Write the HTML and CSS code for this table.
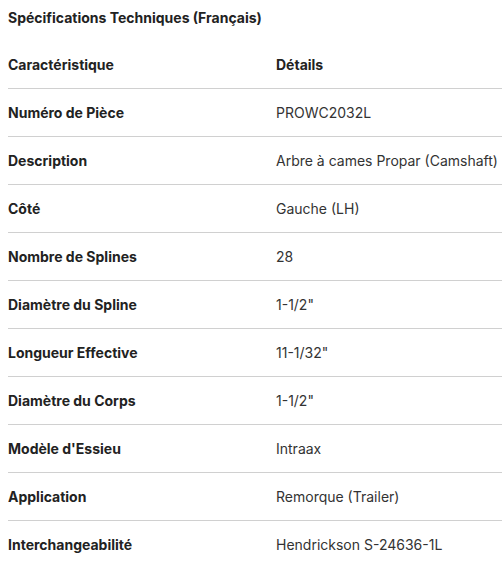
FILE: index.html
```html
<!DOCTYPE html>
<html lang="fr">
<head>
<meta charset="utf-8">
<title>Spécifications Techniques</title>
<link rel="stylesheet" href="styles.css">
</head>
<body>
<div class="spec">
  <div class="spec-title">Spécifications Techniques (Français)</div>
  <div class="spec-table">
    <div class="row head"><div class="key">Caractéristique</div><div class="val">Détails</div></div>
    <div class="row"><div class="key">Numéro de Pièce</div><div class="val">PROWC2032L</div></div>
    <div class="row"><div class="key">Description</div><div class="val">Arbre à cames Propar (Camshaft)</div></div>
    <div class="row"><div class="key">Côté</div><div class="val">Gauche (LH)</div></div>
    <div class="row"><div class="key">Nombre de Splines</div><div class="val">28</div></div>
    <div class="row"><div class="key">Diamètre du Spline</div><div class="val">1-1/2"</div></div>
    <div class="row"><div class="key">Longueur Effective</div><div class="val">11-1/32"</div></div>
    <div class="row"><div class="key">Diamètre du Corps</div><div class="val">1-1/2"</div></div>
    <div class="row"><div class="key">Modèle d'Essieu</div><div class="val">Intraax</div></div>
    <div class="row"><div class="key">Application</div><div class="val">Remorque (Trailer)</div></div>
    <div class="row"><div class="key">Interchangeabilité</div><div class="val">Hendrickson S-24636-1L</div></div>
  </div>
</div>
</body>
</html>
```
FILE: styles.css
```css
html {
  overflow: hidden;
  background: #ffffff;
}
body {
  margin: 8px 0 8px 8px;
  font-family: Inter, "Noto Sans", "Liberation Sans", sans-serif;
  font-size: 14px;
  color: #222222;
}
.spec-title {
  font-weight: 700;
  line-height: 20px;
  margin-bottom: 13px;
}
.spec-table {
  display: flex;
  flex-direction: column;
}
.row {
  display: grid;
  grid-template-columns: 268px 1fr;
  align-items: center;
  height: 47px;
  border-bottom: 1px solid #d0d0d0;
  line-height: 20px;
}
.key {
  font-weight: 700;
  color: #222222;
  white-space: nowrap;
}
.val {
  color: #333333;
  white-space: nowrap;
}
.head .val {
  font-weight: 700;
  color: #222222;
}
```
